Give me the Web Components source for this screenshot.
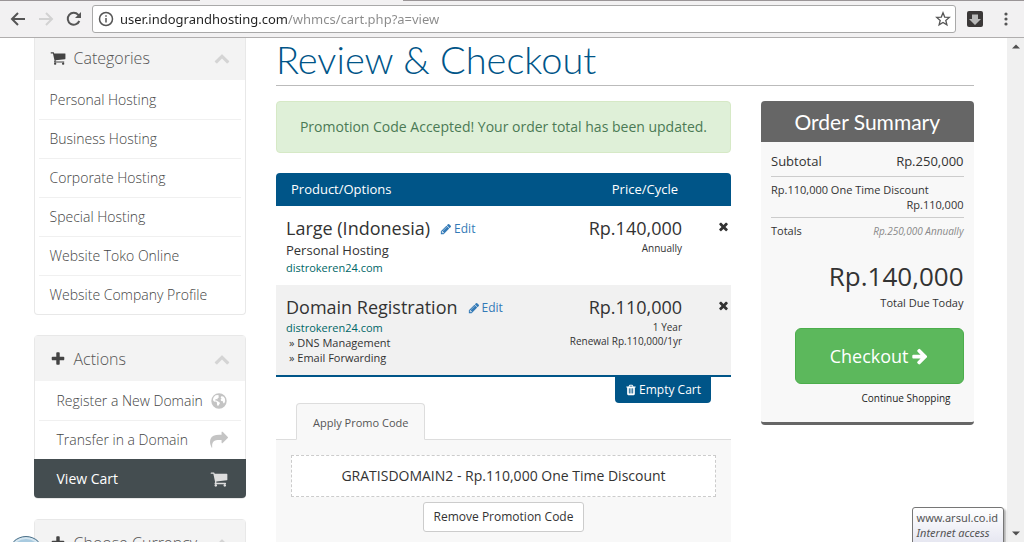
<!DOCTYPE html>
<html lang="en">
<head>
<meta charset="utf-8">
<meta name="viewport" content="width=device-width, initial-scale=1">
<title>Review &amp; Checkout</title>
<style>
  html, body { margin: 0; height: 100%; }
  body { font: 14px/20px "Open Sans", "Noto Sans", sans-serif; color: #333; background: #fff; overflow: hidden; }
</style>
</head>
<body>
<browser-window>
  <checkout-page>
    <nav-panel slot="side" heading="Categories" icon="cart" class="first">
      <nav-item>Personal Hosting</nav-item>
      <nav-item>Business Hosting</nav-item>
      <nav-item>Corporate Hosting</nav-item>
      <nav-item>Special Hosting</nav-item>
      <nav-item>Website Toko Online</nav-item>
      <nav-item>Website Company Profile</nav-item>
    </nav-panel>
    <nav-panel slot="side" heading="Actions" icon="plus">
      <nav-item icon="globe">Register a New Domain</nav-item>
      <nav-item icon="share">Transfer in a Domain</nav-item>
      <nav-item icon="cart" active>View Cart</nav-item>
    </nav-panel>
    <nav-panel slot="side" heading="Choose Currency" icon="plus"></nav-panel>
    <alert-box slot="main">Promotion Code Accepted! Your order total has been updated.</alert-box>
    <cart-table slot="main"></cart-table>
    <promo-panel slot="main"></promo-panel>
    <order-summary slot="summary"></order-summary>
  </checkout-page>
</browser-window>

<script>
const ICONS = {
  cart: 'M704 1536q0 52-38 90t-90 38-90-38-38-90 38-90 90-38 90 38 38 90zm896 0q0 52-38 90t-90 38-90-38-38-90 38-90 90-38 90 38 38 90zm128-1088v512q0 24-16.500 42.500t-40.500 21.500l-1044 122q13 60 13 70 0 16-24 64h920q26 0 45 19t19 45-19 45-45 19h-1024q-26 0-45-19t-19-45q0-11 8-31.500t16-36 21.500-40 15.500-29.500l-177-823h-204q-26 0-45-19t-19-45 19-45 45-19h256q16 0 28.500 6.500t19.500 15.500 13 24.500 8 26 5.500 29.500 4.500 26h1201q26 0 45 19t19 45z',
  plus: 'M1600 736v192q0 40-28 68t-68 28h-416v416q0 40-28 68t-68 28h-192q-40 0-68-28t-28-68v-416h-416q-40 0-68-28t-28-68v-192q0-40 28-68t68-28h416v-416q0-40 28-68t68-28h192q40 0 68 28t28 68v416h416q40 0 68 28t28 68z',
  up: 'M1683 1331l-166 165q-19 19-45 19t-45-19l-531-531-531 531q-19 19-45 19t-45-19l-166-165q-19-19-19-45.500t19-45.500l742-741q19-19 45-19t45 19l742 741q19 19 19 45.500t-19 45.500z',
  globe: 'M896 128a768 768 0 1 1 0 1536a768 768 0 1 1 0-1536zM560 330L380 500L290 720L340 900L470 960L600 940L700 1060L690 1210L770 1400L850 1350L990 1130L940 1010L760 930L640 840L560 860L520 740L640 690L720 740L780 600L900 520L840 440L900 380L760 300zM1150 400L1060 560L1160 640L1050 760L1120 900L1280 930L1330 1110L1420 1130L1510 930L1480 640L1360 480z',
  share: 'M1792 640q0 26-19 45l-512 512q-19 19-45 19t-45-19-19-45v-256h-224q-98 0-175.500 6t-154 21.500-133 42.500-105.500 69.500-80 101-48.500 138.500-17.500 181q0 55 5 123 0 6 2.500 23.500t2.500 26.500q0 15-8.500 25t-23.500 10q-16 0-28-17-7-9-13-22t-13.500-30-10.500-24q-127-285-127-451 0-199 53-333 162-403 875-403h224v-256q0-26 19-45t45-19 45 19l512 512q19 19 19 45z',
  times: 'M1490 1322q0 40-28 68l-136 136q-28 28-68 28t-68-28l-294-294-294 294q-28 28-68 28t-68-28l-136-136q-28-28-28-68t28-68l294-294-294-294q-28-28-28-68t28-68l136-136q28-28 68-28t68 28l294 294 294-294q28-28 68-28t68 28l136 136q28 28 28 68t-28 68l-294 294 294 294q28 28 28 68z',
  pencil: 'M491 1536l91-91-235-235-91 91v107h128v128h107zm523-928q0-22-22-22-10 0-17 7l-542 542q-7 7-7 17 0 22 22 22 10 0 17-7l542-542q7-7 7-17zm-54-192l416 416-832 832h-416v-416zm683 96q0 53-37 90l-166 166-416-416 166-165q36-38 90-38 53 0 91 38l235 234q37 39 37 91z',
  trash: 'M704 1376v-704q0-14-9-23t-23-9h-64q-14 0-23 9t-9 23v704q0 14 9 23t23 9h64q14 0 23-9t9-23zm256 0v-704q0-14-9-23t-23-9h-64q-14 0-23 9t-9 23v704q0 14 9 23t23 9h64q14 0 23-9t9-23zm256 0v-704q0-14-9-23t-23-9h-64q-14 0-23 9t-9 23v704q0 14 9 23t23 9h64q14 0 23-9t9-23zm-544-992h448l-48-117q-7-9-17-11h-317q-10 2-17 11zm928 32v64q0 14-9 23t-23 9h-96v948q0 83-47 143.500t-113 60.500h-832q-66 0-113-58.500t-47-141.500v-952h-96q-14 0-23-9t-9-23v-64q0-14 9-23t23-9h309l70-167q15-37 54-63t79-26h320q40 0 79 26t54 63l70 167h309q14 0 23 9t9 23z',
  arrow: 'M1600 960q0 54-37 91l-651 651q-39 37-91 37-51 0-90-37l-75-75q-38-38-38-91t38-91l293-293h-704q-52 0-84.500-37.500t-32.500-90.500v-128q0-53 32.500-90.500t84.500-37.500h704l-293-294q-38-36-38-90t38-90l75-75q38-38 90-38 53 0 91 38l651 651q37 35 37 90z'
};

function define(name, render) {
  customElements.define(name, class extends HTMLElement {
    connectedCallback() {
      if (this.shadowRoot) return;
      const t = document.createElement('template');
      t.innerHTML = render(this);
      this.attachShadow({ mode: 'open' }).append(t.content.cloneNode(true));
    }
  });
}

define('ui-icon', el => `
  <style>
    :host { display: inline-block; width: var(--icon, 14px); height: var(--icon, 14px); flex: none; }
    svg { display: block; width: 100%; height: 100%; fill: currentColor; fill-rule: evenodd; }
  </style>
  <svg viewBox="0 0 1792 1792" aria-hidden="true"><path d="${ICONS[el.getAttribute('name')]}"/></svg>`);

define('browser-window', () => `
  <style>
    :host { display: flex; flex-direction: column; height: 100vh; position: relative; overflow: hidden; }
    .view { flex: 1; min-height: 0; display: flex; }
    .page { flex: 1; min-width: 0; overflow: hidden; }
    .orb { position: absolute; left: 8px; bottom: -30px; width: 34px; height: 34px; border: 1px solid #4c7088; border-radius: 50%; background: #a9cbe0; box-shadow: inset 0 0 0 2px #d5e6f0; z-index: 1; }
    net-tooltip { position: absolute; right: 20px; bottom: -4px; }
  </style>
  <address-bar></address-bar>
  <div class="view">
    <div class="page"><slot></slot></div>
    <scroll-rail></scroll-rail>
  </div>
  <div class="orb"></div>
  <net-tooltip></net-tooltip>`);

define('address-bar', () => `
  <style>
    :host { display: flex; align-items: center; height: 38px; flex: none; box-sizing: border-box; padding-left: 10px; background: linear-gradient(90deg, #9a9597 200px, #f2f1f2 200px, #f2f1f2 403px, #9a9597 403px) 0 0 / 100% 1px no-repeat #f2f1f2; border-bottom: 1px solid #b0aeae; }
    button { border: 0; padding: 0; background: none; display: block; }
    svg { display: block; }
    .nav { display: flex; gap: 12px; }
    .field { flex: 1; display: flex; align-items: center; gap: 6px; height: 26px; margin: 0 10px; padding: 0 4px 0 5px; border: 1px solid #a9a9a9; border-radius: 3px; background: #fff; }
    input { flex: 1; min-width: 0; border: 0; padding: 0; outline: 0; height: 24px; font: 13px/24px "Noto Sans", sans-serif; color: #222; -webkit-text-fill-color: transparent; background: linear-gradient(90deg, #222 168px, #8a8a8a 168px); -webkit-background-clip: text; background-clip: text; }
    .menu { margin: 0 10px 0 14px; }
  </style>
  <div class="nav">
    <button aria-label="Back"><svg width="16" height="18" viewBox="0 0 16 18" fill="none" stroke="#555" stroke-width="2"><path d="M15 9H2.500M8 3L2 9l6 6"/></svg></button>
    <button aria-label="Forward"><svg width="16" height="18" viewBox="0 0 16 18" fill="none" stroke="#d2d2d2" stroke-width="2"><path d="M1 9h12.500M8 3l6 6-6 6"/></svg></button>
    <button aria-label="Reload"><svg width="16" height="18" viewBox="0 0 16 18" fill="none" stroke="#555" stroke-width="2"><path d="M13.300 11A6 6 0 1 1 12.300 4.800L14 6.500"/><path d="M15 2v6H9z" fill="#555" stroke="none"/></svg></button>
  </div>
  <div class="field">
    <svg width="16" height="16" viewBox="0 0 16 16" fill="none" stroke="#555" stroke-width="1.500"><circle cx="8" cy="8" r="6.500"/><path d="M8 7v4.500M8 4.200v1.600"/></svg>
    <input type="text" aria-label="Address" value="user.indograndhosting.com/whmcs/cart.php?a=view">
    <button aria-label="Bookmark"><svg width="16" height="16" viewBox="0 0 16 16" fill="none" stroke="#555" stroke-width="1.300"><path d="M8 1.800l1.700 4.300 4.600.3-3.500 3 1.100 4.500L8 11.400l-3.900 2.500 1.100-4.500-3.500-3 4.600-.3z"/></svg></button>
  </div>
  <button aria-label="Downloads"><svg width="18" height="18" viewBox="0 0 18 18"><rect x="1" y="1" width="16" height="16" rx="2" fill="#3b3838"/><path d="M6 4.500h6V9h3l-6 6-6-6h3z" fill="#b8b8b8"/></svg></button>
  <button class="menu" aria-label="Menu"><svg width="16" height="16" viewBox="0 0 16 16" fill="#555"><circle cx="8" cy="3" r="1.600"/><circle cx="8" cy="8" r="1.600"/><circle cx="8" cy="13" r="1.600"/></svg></button>`);

define('scroll-rail', () => `
  <style>
    :host { display: flex; flex-direction: column; justify-content: space-between; align-items: center; width: 17px; flex: none; box-sizing: border-box; padding: 6px 0; background: #f0f0f0; }
    svg { display: block; fill: #505050; }
  </style>
  <svg width="8" height="5" viewBox="0 0 8 5"><path d="M0 4.500L4 .5l4 4z"/></svg>
  <svg width="8" height="5" viewBox="0 0 8 5"><path d="M0 .5h8l-4 4z"/></svg>`);

define('net-tooltip', () => `
  <style>
    :host { display: block; box-sizing: border-box; padding: 2px 5px 5px 4px; border: 1px solid #767676; border-radius: 3px; background: linear-gradient(#fff, #e4e5f0); box-shadow: 2px 2px 2px rgba(0,0,0,.3); font: 11px/15px "Noto Sans", sans-serif; color: #555; }
    div, em { display: block; }
  </style>
  <div>www.arsul.co.id</div><em>Internet access</em>`);

define('checkout-page', () => `
  <style>
    :host { display: flex; max-width: 970px; margin: 0 auto; }
    .side { width: 25%; box-sizing: border-box; padding: 0 15px; }
    .body { width: 75%; box-sizing: border-box; padding: 0 15px; }
    h1 { margin: 0 0 15px; padding-bottom: 4px; border-bottom: 1px solid #bbb; font: 300 38px/43px Lato, sans-serif; color: #058; }
    .cols { display: flex; gap: 30px; }
    .main { flex: 1; min-width: 0; }
    .sum { width: calc((100% - 60px) / 3); flex: none; }
  </style>
  <aside class="side"><slot name="side"></slot></aside>
  <main class="body">
    <h1>Review &amp; Checkout</h1>
    <div class="cols">
      <div class="main"><slot name="main"></slot></div>
      <div class="sum"><slot name="summary"></slot></div>
    </div>
  </main>`);

define('nav-panel', el => `
  <style>
    :host { display: block; margin-bottom: 20px; border: 1px solid #e8e8e8; border-radius: 4px; }
    :host(.first) { border-top: 0; border-radius: 0 0 4px 4px; }
    header { display: flex; align-items: center; gap: 8px; padding: 12px 15px 11px; background: #f3f3f3; color: #555; }
    :host(.first) header { padding-top: 9px; }
    h2 { flex: 1; margin: 0; font: 300 16px/22px "Open Sans", sans-serif; }
    header > ui-icon { --icon: 16px; color: #444; }
    header > .fold { --icon: 16px; color: #d4d4d4; }
  </style>
  <header><ui-icon name="${el.getAttribute('icon')}"></ui-icon><h2>${el.getAttribute('heading')}</h2><ui-icon class="fold" name="up"></ui-icon></header>
  <nav><slot></slot></nav>`);

define('nav-item', el => {
  const icon = el.getAttribute('icon');
  return `
  <style>
    :host { display: block; margin: 0 4px; border-top: 1px solid #f0f0f0; }
    :host(:first-child) { border-top-color: transparent; }
    a { display: flex; align-items: center; justify-content: space-between; padding: 9px 11px; color: #444; text-decoration: none; line-height: 20px; font-weight: 300; white-space: nowrap; }
    :host([icon]) a { padding: 9px 13px 9px 18px; }
    ui-icon { --icon: 18px; color: #c4c4c4; }
    :host([active]) { margin: 0 -1px; border-color: #444d50; background: #444d50; border-radius: 0 0 4px 4px; }
    :host([active]) a { color: #fff; font-weight: 400; padding: 9px 18px 9px 23px; }
    :host([active]) ui-icon { color: #ddd; }
  </style>
  <a href="#"><slot></slot>${icon ? `<ui-icon name="${icon}"></ui-icon>` : ''}</a>`;
});

define('alert-box', () => `
  <style>
    :host { display: block; margin-bottom: 20px; padding: 15px; border: 1px solid #d6e9c6; border-radius: 4px; background: #dff0d8; color: #4b7a55; text-align: center; white-space: nowrap; }
  </style>
  <slot></slot>`);

define('cart-table', () => `
  <style>
    :host { display: block; }
    table { width: 100%; border-collapse: separate; border-spacing: 0; border-bottom: 2px solid #058; table-layout: fixed; }
    .price { width: 130px; } .remove { width: 49px; }
    th { background: #058; color: #fff; font-weight: 400; font-size: 13px; line-height: 19px; padding: 7px 4px 7px 15px; text-align: left; }
    th:first-child { border-radius: 4px 0 0 0; } th:last-child { border-radius: 0 4px 0 0; }
    th.r { text-align: right; }
    td { vertical-align: top; padding: 9px 0 10px; font-size: 11px; line-height: 15px; white-space: nowrap; }
    td:first-child { padding-left: 10px; }
    .alt td { background: #f1f1f1; }
    .r { text-align: right; }
    .name { display: flex; align-items: center; gap: 10px; font-size: 18px; line-height: 26px; }
    .name a { display: flex; align-items: center; gap: 2px; font-size: 12px; color: #337ab7; text-decoration: none; padding-top: 2px; line-height: 24px; }
    .name ui-icon { --icon: 12px; }
    .group { font-size: 13px; line-height: 19px; }
    .domain { color: #066; }
    .amount { font-size: 18px; line-height: 26px; }
    .cycle { font-size: 10px; line-height: 14px; }
    .add { padding-left: 3px; }
    td button { border: 0; padding: 0; background: none; color: #333; display: block; margin: 5px 1px 0 auto; --icon: 13px; line-height: 0; }
    .empty { display: flex; justify-content: flex-end; padding-right: 20px; }
    .empty button { display: flex; align-items: center; gap: 2px; border: 0; border-radius: 0 0 4px 4px; background: #058; color: #fff; font: 12px/18px "Open Sans", sans-serif; padding: 4px 10px; --icon: 12px; }
  </style>
  <table>
    <colgroup><col><col class="price"><col class="remove"></colgroup>
    <thead><tr><th scope="col">Product/Options</th><th scope="col" class="r">Price/Cycle</th><th></th></tr></thead>
    <tbody>
      <tr>
        <td><div class="name">Large (Indonesia) <a href="#"><ui-icon name="pencil"></ui-icon>Edit</a></div>
          <div class="group">Personal Hosting</div><div class="domain">distrokeren24.com</div></td>
        <td class="r"><div class="amount">Rp.140,000</div><div class="cycle">Annually</div></td>
        <td><button aria-label="Remove Large (Indonesia)"><ui-icon name="times"></ui-icon></button></td>
      </tr>
      <tr class="alt">
        <td><div class="name">Domain Registration <a href="#"><ui-icon name="pencil"></ui-icon>Edit</a></div>
          <div class="domain">distrokeren24.com</div><div class="add">» DNS Management</div><div class="add">» Email Forwarding</div></td>
        <td class="r"><div class="amount">Rp.110,000</div><div class="cycle">1 Year</div><div class="cycle">Renewal Rp.110,000/1yr</div></td>
        <td><button aria-label="Remove Domain Registration"><ui-icon name="times"></ui-icon></button></td>
      </tr>
    </tbody>
  </table>
  <div class="empty"><button><ui-icon name="trash"></ui-icon>Empty Cart</button></div>`);

define('promo-panel', () => `
  <style>
    :host { display: block; }
    .tabs { display: flex; padding-left: 20px; border-bottom: 1px solid #ddd; }
    .tabs button { margin-bottom: -1px; border: 1px solid #ddd; border-bottom-color: #f8f8f8; border-radius: 4px 4px 0 0; background: #f8f8f8; color: #555; font: 11px/17px "Open Sans", sans-serif; padding: 10px 16px 8px; }
    .panel { display: flex; flex-direction: column; align-items: center; gap: 5px; padding: 15px 15px 20px; background: #f8f8f8; }
    .code { align-self: stretch; padding: 10px; border: 1px dashed #ccc; background: #fff; text-align: center; white-space: nowrap; }
    .remove { border: 1px solid #ccc; border-radius: 3px; background: #fff; color: #333; font: 12px/18px "Open Sans", sans-serif; padding: 5px 10px; }
  </style>
  <div class="tabs" role="tablist"><button role="tab" aria-selected="true">Apply Promo Code</button></div>
  <div class="panel" role="tabpanel">
    <div class="code">GRATISDOMAIN2 - Rp.110,000 One Time Discount</div>
    <button class="remove">Remove Promotion Code</button>
  </div>`);

define('order-summary', () => `
  <style>
    :host { display: block; border-bottom: 3px solid #666; border-radius: 4px; background: #f8f8f8; overflow: hidden; }
    h2 { margin: 0; background: #666; color: #fff; text-align: center; font: 400 21px/41px Lato, sans-serif; }
    .in { display: flex; flex-direction: column; padding: 10px 10px 16px; white-space: nowrap; }
    .row { display: flex; justify-content: space-between; }
    .sub { font-size: 13px; line-height: 19px; padding-bottom: 5px; }
    .disc { border-top: 1px solid #ccc; border-bottom: 1px solid #ccc; padding: 5px 0; font-size: 11px; line-height: 15px; }
    .disc div + div, .right { text-align: right; }
    .tot { padding-top: 5px; font-size: 11px; line-height: 16px; }
    .tot em { color: #888; font-size: 10px; }
    .due { margin-top: 17px; font-size: 26px; line-height: 40px; }
    .today { font-size: 11px; line-height: 14px; }
    .go { align-self: flex-end; display: flex; align-items: center; gap: 2px; margin-top: 18px; padding: 15px 34px; border: 1px solid #4cae4c; border-radius: 6px; background: #5cb85c; color: #fff; font: 18px/24px "Open Sans", sans-serif; --icon: 18px; }
    a { align-self: flex-end; margin: 6px 13px 0 0; font-size: 10px; line-height: 16px; color: #222; text-decoration: none; }
  </style>
  <h2>Order Summary</h2>
  <div class="in">
    <div class="row sub"><span>Subtotal</span><span>Rp.250,000</span></div>
    <div class="disc"><div>Rp.110,000 One Time Discount</div><div>Rp.110,000</div></div>
    <div class="row tot"><span>Totals</span><em>Rp.250,000 Annually</em></div>
    <div class="right due">Rp.140,000</div>
    <div class="right today">Total Due Today</div>
    <button class="go">Checkout<ui-icon name="arrow"></ui-icon></button>
    <a href="#">Continue Shopping</a>
  </div>`);
</script>
</body>
</html>
